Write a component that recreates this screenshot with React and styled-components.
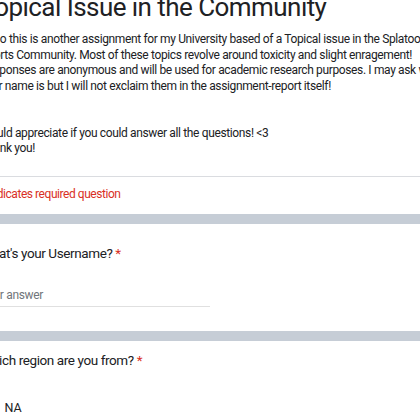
import React from "react";
import styled, { createGlobalStyle } from "styled-components";

const Global = createGlobalStyle`
  html, body { margin: 0; padding: 0; background: #ffffff; }
  body { font-family: Roboto, "Liberation Sans", Arial, sans-serif; }
`;

const Viewport = styled.div`
  width: 420px;
  height: 420px;
  overflow: hidden;
  background: #c6cdd6;
`;

const Page = styled.div`
  width: 640px;
  margin-left: -43.5px;
  margin-top: -9px;
  display: flex;
  flex-direction: column;
  gap: 10px;
`;

const Card = styled.section`
  background: #ffffff;
  padding: ${(p) => p.$pad || "0 24px"};
  display: flex;
  flex-direction: column;
`;

const Title = styled.h1`
  margin: 0;
  font-size: 26px;
  line-height: 32px;
  letter-spacing: -0.55px;
  font-weight: 400;
  color: #202124;
`;

const Description = styled.div`
  margin-top: 9px;
  font-size: 12px;
  line-height: 15.6px;
  letter-spacing: -0.36px;
  color: #202124;
  white-space: pre;
`;

const Divider = styled.hr`
  border: 0;
  border-top: 1px solid #dadce0;
  margin: 19px -24px 0;
`;

const Required = styled.div`
  padding: 9px 0 12px;
  font-size: 12px;
  line-height: 16px;
  letter-spacing: -0.45px;
  color: #d93025;
`;

const Question = styled.div`
  font-size: 13.5px;
  line-height: 20px;
  letter-spacing: -0.4px;
  color: #202124;
`;

const Star = styled.span`
  color: #d93025;
`;

const Field = styled.div`
  margin-top: ${(p) => p.$top}px;
  width: 229px;
  padding-bottom: 3px;
  border-bottom: 1px solid #e0e0e0;
  font-size: 12px;
  line-height: 16px;
  letter-spacing: -0.33px;
  color: #70757a;
`;

const Option = styled.label`
  margin-top: ${(p) => p.$top}px;
  display: flex;
  align-items: center;
  gap: 8px;
  font-size: 12.5px;
  line-height: 20px;
  color: #202124;
`;

const Radio = styled.span`
  width: 16px;
  height: 16px;
  border-radius: 50%;
  border: 2px solid #5f6368;
  box-sizing: border-box;
`;

const description = `Hello this is another assignment for my University based of a Topical issue in the Splatoon
Sports Community. Most of these topics revolve around toxicity and slight enragement!
Responses are anonymous and will be used for academic research purposes. I may ask what
your name is but I will not exclaim them in the assignment-report itself!


Would appreciate if you could answer all the questions! <3
Thank you!`;

export default function App() {
  return (
    <>
      <Global />
      <Viewport>
        <Page>
          <Card>
            <Title>Topical Issue in the Community</Title>
            <Description>{description}</Description>
            <Divider />
            <Required>* Indicates required question</Required>
          </Card>
          <Card $pad="19px 24px 24px">
            <Question>
              What's your Username? <Star>*</Star>
            </Question>
            <Field $top={24}>Your answer</Field>
          </Card>
          <Card $pad="9px 24px 24px">
            <Question>
              Which region are you from? <Star>*</Star>
            </Question>
            <Option $top={28}>
              <Radio />
              NA
            </Option>
          </Card>
        </Page>
      </Viewport>
    </>
  );
}
